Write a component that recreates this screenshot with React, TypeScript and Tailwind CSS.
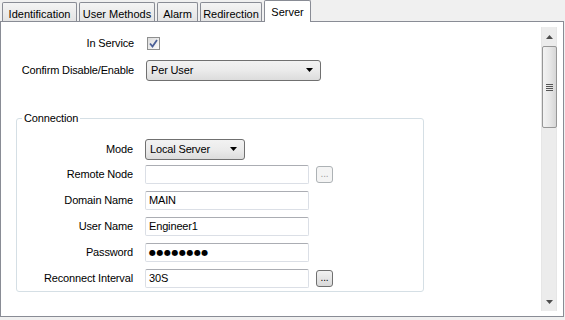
import { ReactNode } from 'react'

const font = { fontFamily: '"Liberation Sans", Arial, sans-serif' }

function Tab({ label, width, active }: { label: string; width: string; active?: boolean }) {
  if (active) {
    return (
      <div
        className={`${width} h-[22px] -mb-[1px] relative z-10 bg-white border border-b-0 border-[#898c95] rounded-t-[2px] flex items-start justify-center pt-[3px]`}
      >
        {label}
      </div>
    )
  }
  return (
    <div
      className={`${width} h-[19px] border border-b-0 border-[#898c95] rounded-t-[2px] bg-gradient-to-b from-[#f4f4f4] to-[#e4e4e4] flex items-start justify-center pt-[3px]`}
    >
      {label}
    </div>
  )
}

function Row({ label, labelW, children, className = '' }: { label: string; labelW: string; children: ReactNode; className?: string }) {
  return (
    <div className={`flex items-center ${className}`}>
      <div className={`${labelW} text-right shrink-0 whitespace-nowrap`}>{label}</div>
      <div className="ml-[12px] flex items-center">{children}</div>
    </div>
  )
}

function TextBox({ value, width = 'w-[164px]', children }: { value?: string; width?: string; children?: ReactNode }) {
  return (
    <div
      className={`${width} h-[19px] border border-[#dbdfe6] border-t-[#abadb3] rounded-[2px] bg-white flex items-center pl-[3px] leading-none`}
    >
      {children ?? value}
    </div>
  )
}

function Select({ value, width }: { value: string; width: string }) {
  return (
    <div
      className={`${width} h-[21px] border border-[#707070] rounded-[3px] bg-gradient-to-b from-[#f2f2f2] via-[#ebebeb] to-[#dcdcdc] flex items-center justify-between pl-[4px] pr-[6px]`}
    >
      <span>{value}</span>
      <svg width="8" height="5" viewBox="0 0 8 5">
        <path d="M0 0 H7 L3.5 4 Z" fill="#000" />
      </svg>
    </div>
  )
}

function DotsButton({ disabled }: { disabled?: boolean }) {
  return (
    <div
      className={`ml-[7px] w-[17px] h-[17px] rounded-[3px] border flex items-end justify-center pb-[3px] text-[10px] leading-none ${
        disabled
          ? 'border-[#adb2b5] bg-[#f4f4f4] text-[#a0a0a0]'
          : 'border-[#707070] bg-gradient-to-b from-[#f2f2f2] to-[#d9d9d9] text-black'
      }`}
    >
      ...
    </div>
  )
}

function Scrollbar() {
  return (
    <div className="w-[16px] mt-[5px] mb-[5px] mr-[6px] bg-[#ececec] border-x border-[#e6e6e6] flex flex-col items-center">
      <div className="h-[19px] w-full flex items-center justify-center">
        <svg width="7" height="4" viewBox="0 0 7 4">
          <path d="M3.5 0 L7 4 H0 Z" fill="#4d4d4d" />
        </svg>
      </div>
      <div className="w-[15px] h-[82px] rounded-[2px] border border-[#979797] bg-gradient-to-r from-[#f3f3f3] via-[#e8e8e8] to-[#d6d6d6] flex flex-col items-center justify-center gap-[1px]">
        <div className="w-[7px] h-[1px] bg-[#555]" />
        <div className="w-[7px] h-[1px] bg-[#555]" />
        <div className="w-[7px] h-[1px] bg-[#555]" />
        <div className="w-[7px] h-[1px] bg-[#555]" />
      </div>
      <div className="flex-1" />
      <div className="h-[19px] w-full flex items-center justify-center">
        <svg width="7" height="4" viewBox="0 0 7 4">
          <path d="M0 0 H7 L3.5 4 Z" fill="#4d4d4d" />
        </svg>
      </div>
    </div>
  )
}

export default function App() {
  return (
    <div className="w-[565px] h-[320px] bg-[#f0f0f0] text-[11px] text-black overflow-hidden" style={font}>
      <div className="h-[21px] flex items-end pl-[2px] gap-[2px]">
        <Tab label="Identification" width="w-[75px]" />
        <Tab label="User Methods" width="w-[76px]" />
        <Tab label="Alarm" width="w-[41px]" />
        <Tab label="Redirection" width="w-[62px]" />
        <Tab label="Server" width="w-[47px]" active />
      </div>
      <div className="w-[564px] h-[296px] bg-white border border-[#898c95] flex">
        <div className="flex-1 pt-[15px] tracking-[-0.15px]">
          <Row label="In Service" labelW="w-[133px]" className="h-[13px]">
            <div className="ml-[1px] w-[13px] h-[13px] border border-[#8e8f8f] bg-gradient-to-br from-[#dcdcdc] to-[#fbfbfb] flex items-center justify-center">
              <svg width="9" height="9" viewBox="0 0 9 9">
                <path d="M1 4.5 L3.5 7.5 L8 1" stroke="#4a5f97" strokeWidth="1.8" fill="none" />
              </svg>
            </div>
          </Row>
          <Row label="Confirm Disable/Enable" labelW="w-[133px]" className="mt-[10px]">
            <Select value="Per User" width="w-[175px]" />
          </Row>
          <fieldset className="ml-[15px] mt-[31px] w-[408px] h-[180px] border border-[#d5dfe5] rounded-[3px] px-0 pb-[5px]">
            <legend className="ml-[5px] px-[2px] leading-[13px]">Connection</legend>
            <div className="pt-[14px] flex flex-col gap-[5px]">
              <Row label="Mode" labelW="w-[116px]">
                <Select value="Local Server" width="w-[100px]" />
              </Row>
              <div className="flex flex-col gap-[7px]">
                <Row label="Remote Node" labelW="w-[116px]">
                  <TextBox value="" />
                  <DotsButton disabled />
                </Row>
                <Row label="Domain Name" labelW="w-[116px]">
                  <TextBox value="MAIN" />
                </Row>
                <Row label="User Name" labelW="w-[116px]">
                  <TextBox value="Engineer1" />
                </Row>
                <Row label="Password" labelW="w-[116px]">
                  <TextBox>
                    <span className="text-[8px] tracking-[0.5px]" style={{ fontFamily: '"DejaVu Sans", sans-serif' }}>
                      ●●●●●●●●
                    </span>
                  </TextBox>
                </Row>
                <Row label="Reconnect Interval" labelW="w-[116px]">
                  <TextBox value="30S" />
                  <DotsButton />
                </Row>
              </div>
            </div>
          </fieldset>
        </div>
        <Scrollbar />
      </div>
    </div>
  )
}
